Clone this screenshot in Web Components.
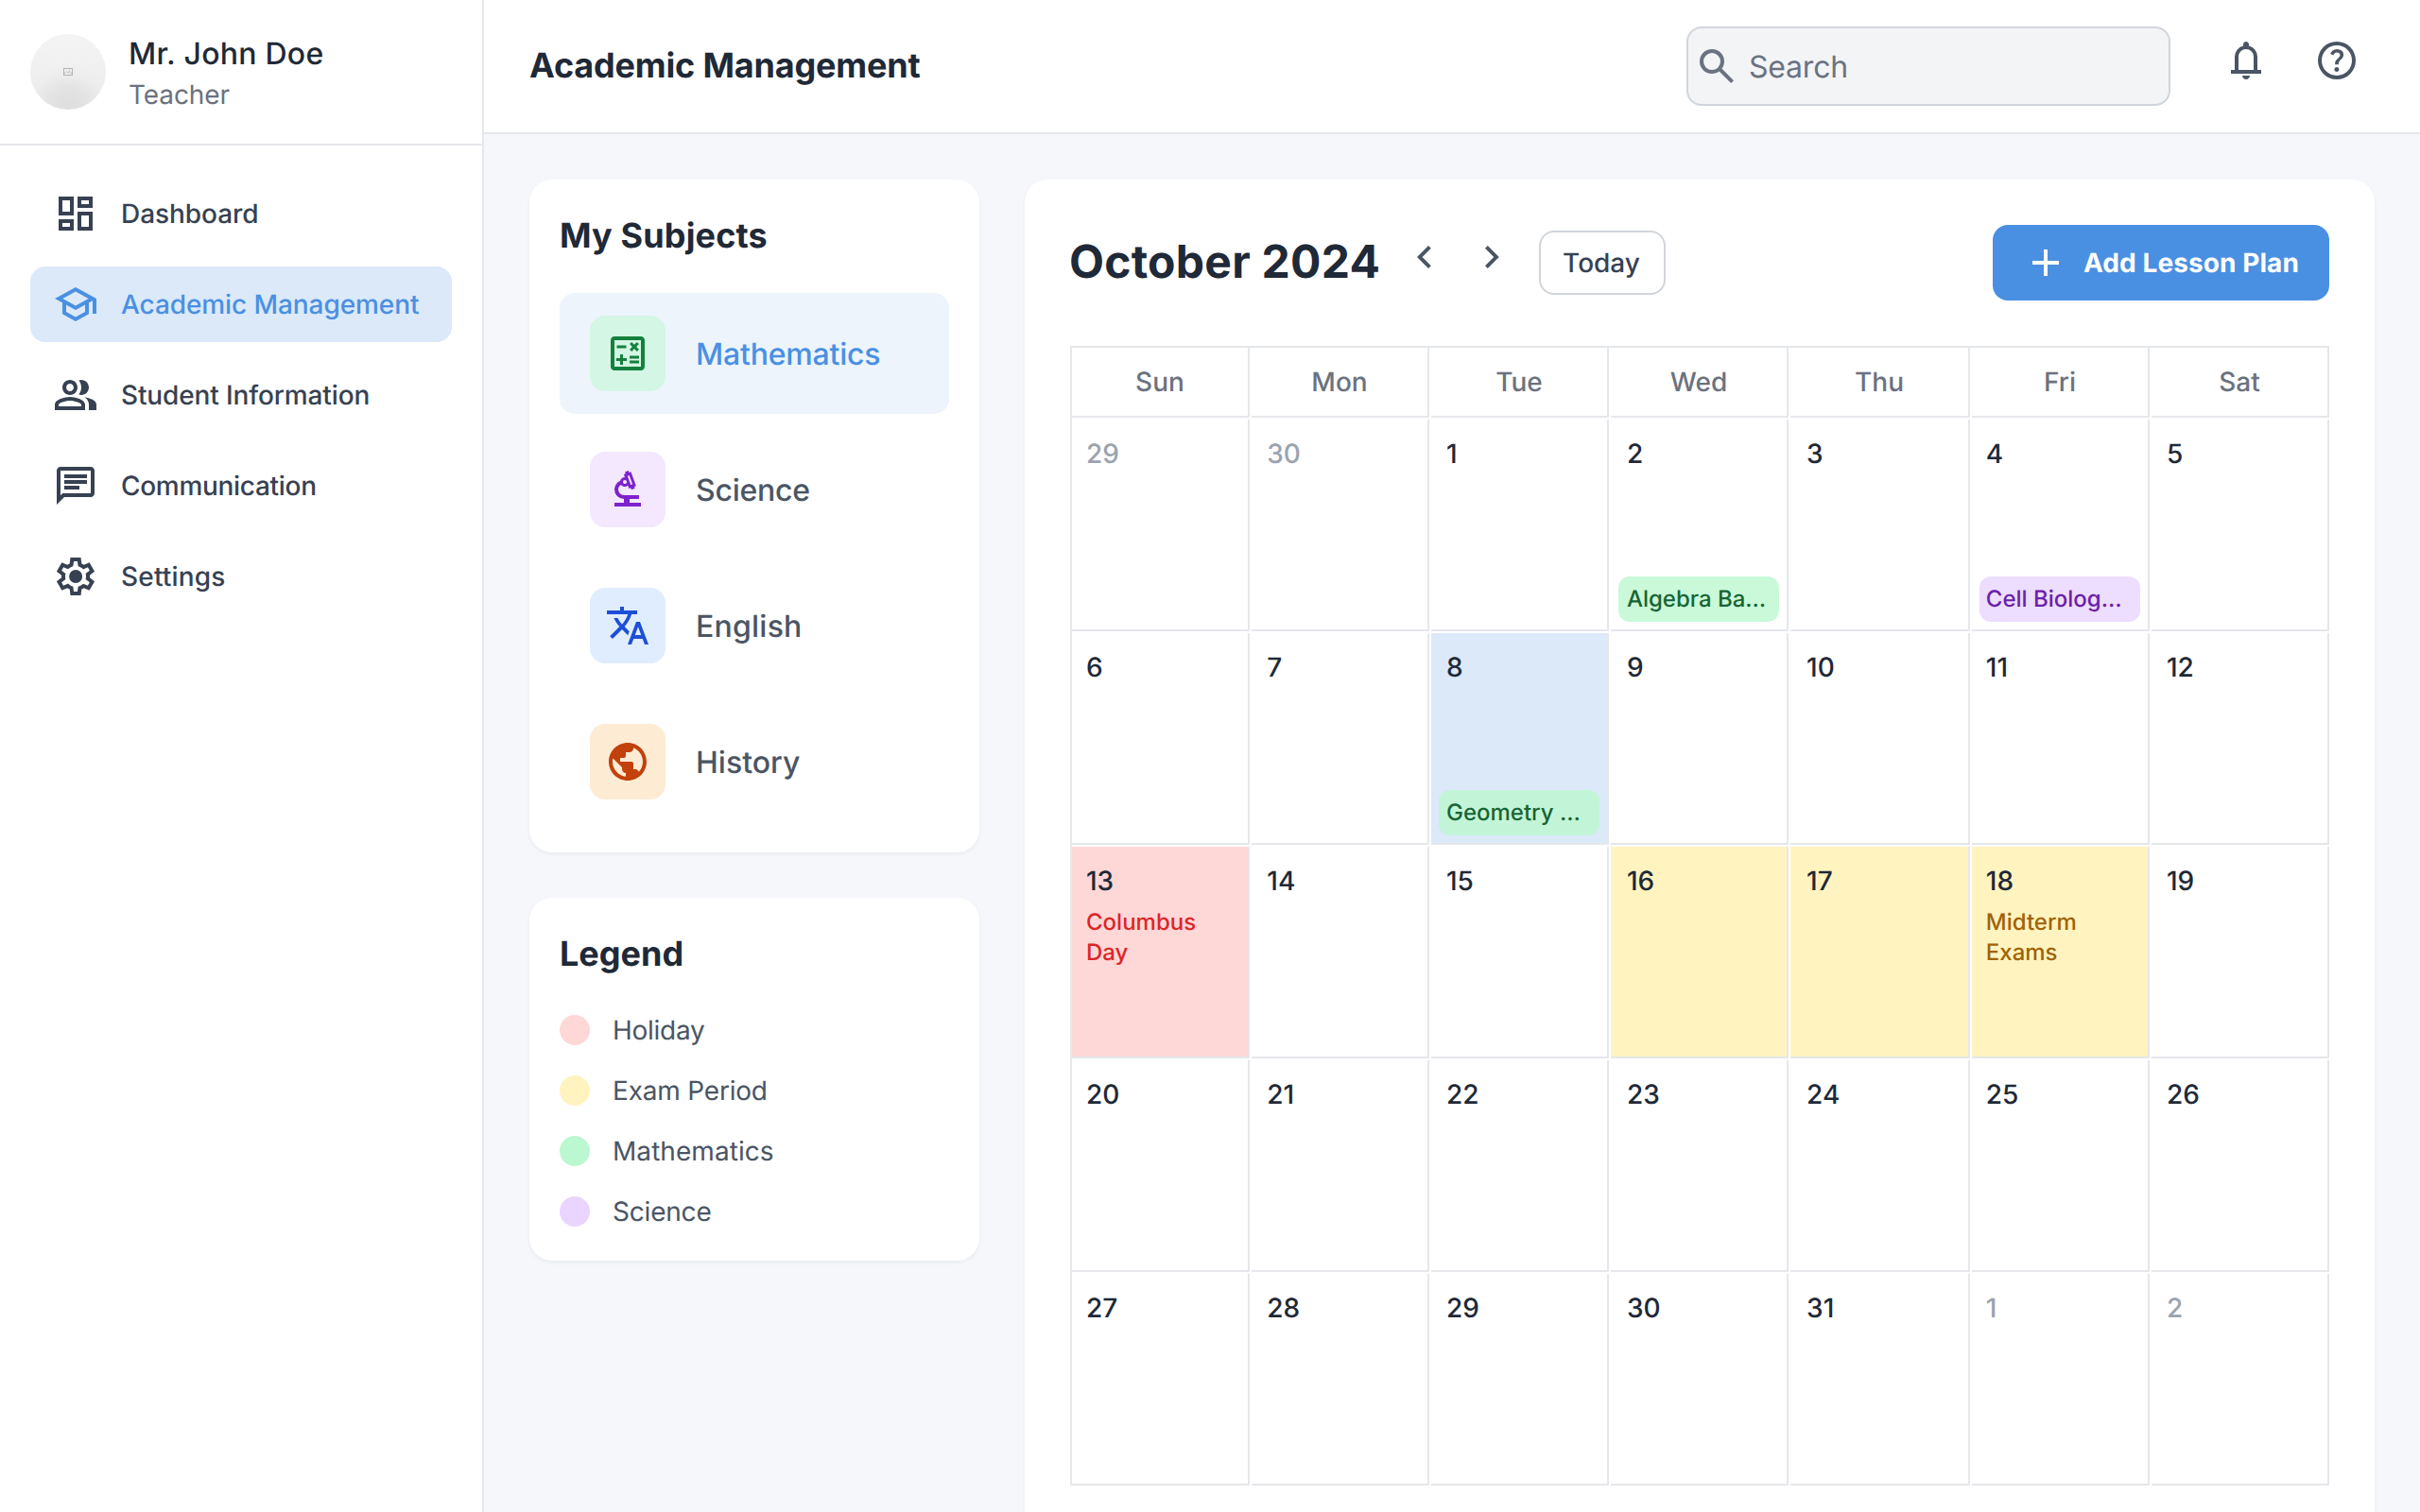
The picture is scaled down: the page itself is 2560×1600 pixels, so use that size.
<!DOCTYPE html>
<html lang="en">
<head>
<meta charset="utf-8">
<title>Academic Management</title>
<style>
  html, body { margin: 0; height: 100%; }
  body { font-family: Inter, "Liberation Sans", sans-serif; font-size: 32px; line-height: 48px; color: #1f2937; background: #f5f7fb; overflow: hidden; text-rendering: geometricPrecision; }
</style>
</head>
<body>
<school-app></school-app>
<script>
const ICONS = {
  dashboard: ['0 0 24 24', 'M19 5v2h-4V5h4M9 5v6H5V5h4m10 8v6h-4v-6h4M9 17v2H5v-2h4M21 3h-8v6h8V3zM11 3H3v10h8V3zm10 8h-8v10h8V11zm-10 4H3v6h8v-6z'],
  school: ['0 0 24 24', 'M12 3L1 9l4 2.18v6L12 21l7-3.82v-6l2-1.09V17h2V9L12 3zm6.82 6L12 12.72 5.18 9 12 5.28 18.82 9zM17 15.99l-5 2.73-5-2.73v-3.72L12 15l5-2.73v3.72z'],
  group: ['0 0 24 24', 'M16.67 13.13C18.04 14.06 19 15.32 19 17v3h4v-3c0-2.18-3.57-3.47-6.33-3.87zM15 12c2.21 0 4-1.79 4-4s-1.79-4-4-4c-.47 0-.91.1-1.33.24C14.5 5.27 15 6.58 15 8s-.5 2.73-1.33 3.76c.42.14.86.24 1.33.24zM9 12c2.21 0 4-1.79 4-4s-1.79-4-4-4-4 1.79-4 4 1.79 4 4 4zm0-6c1.1 0 2 .9 2 2s-.9 2-2 2-2-.9-2-2 .9-2 2-2zm0 7c-2.67 0-8 1.34-8 4v3h16v-3c0-2.66-5.33-4-8-4zm6 5H3v-.99C3.2 16.29 6.3 15 9 15s5.8 1.29 6 2v1z'],
  chat: ['0 0 24 24', 'M4 4h16v12H5.17L4 17.17V4m0-2c-1.1 0-1.99.9-1.99 2L2 22l4-4h14c1.1 0 2-.9 2-2V4c0-1.1-.9-2-2-2H4zm2 10h8v2H6v-2zm0-3h12v2H6V9zm0-3h12v2H6V6z'],
  settings: ['0 -960 960 960', 'm370-80-16-128q-13-5-24.5-12T307-235l-119 50L78-375l103-78q-1-7-1-13.5v-27q0-6.5 1-13.5L78-585l110-190 119 50q11-8 23-15t24-12l16-128h220l16 128q13 5 24.5 12t22.5 15l119-50 110 190-103 78q1 7 1 13.5v27q0 6.5-2 13.5l103 78-110 190-118-50q-11 8-23 15t-24 12L590-80H370Zm70-80h79l14-106q31-8 57.5-23.5T639-327l99 41 39-68-86-65q5-14 7-29.5t2-31.5q0-16-2-31.5t-7-29.5l86-65-39-68-99 42q-22-23-48.5-38.5T533-694l-13-106h-79l-14 106q-31 8-57.5 23.5T321-633l-99-41-39 68 86 64q-5 15-7 30t-2 32q0 16 2 31t7 30l-86 65 39 68 99-42q22 23 48.5 38.5T427-266l13 106Zm42-180q58 0 99-41t41-99q0-58-41-99t-99-41q-59 0-99.5 41T342-480q0 58 40.5 99t99.5 41Z'],
  calculate: ['0 0 24 24', 'M19 3H5c-1.1 0-2 .9-2 2v14c0 1.1.9 2 2 2h14c1.1 0 2-.9 2-2V5c0-1.1-.9-2-2-2zm0 16H5V5h14v14zM6.25 7.72h5v1.5h-5zM13 15.75h5v1.5h-5zM13 13.25h5v1.5h-5zM8 18h1.5v-2h2v-1.5h-2v-2H8v2H6V16h2zM14.09 10.95l1.41-1.41 1.41 1.41 1.06-1.06-1.41-1.42 1.41-1.41L16.91 6l-1.41 1.41L14.09 6l-1.06 1.06 1.41 1.41-1.41 1.42z'],
  biotech: ['0 -960 960 960', 'M200-120v-80h200v-80q-83 0-141.5-58.5T200-480q0-61 33.5-111t89.5-73q8-34 35.5-55t61.5-21l-22-62 38-14-14-36 76-28 12 38 38-14 110 300-38 14 14 38-76 28-12-38-38 14-24-66q-15 14-34.5 21t-39.5 5q-22-2-41-13.5T338-582q-27 16-42.5 43T280-480q0 50 35 85t85 35h320v80H520v80h240v80H200Zm346-458 36-14-68-188-38 14 70 188Zm-126-22q17 0 28.5-11.5T460-640q0-17-11.5-28.5T420-680q-17 0-28.5 11.5T380-640q0 17 11.5 28.5T420-600Z'],
  translate: ['0 0 24 24', 'M12.87 15.07l-2.54-2.51.03-.03c1.74-1.94 2.98-4.17 3.71-6.53H17V4h-7V2H8v2H1v1.99h11.17C11.5 7.92 10.44 9.75 9 11.35 8.07 10.32 7.3 9.19 6.69 8h-2c.73 1.63 1.73 3.17 2.98 4.56l-5.09 5.02L4 19l5-5 3.11 3.11.76-2.04zM18.5 10h-2L12 22h2l1.12-3h4.75L21 22h2l-4.5-12zm-2.62 7l1.62-4.33L19.12 17h-3.24z'],
  public: ['0 0 24 24', 'M12 2C6.48 2 2 6.48 2 12s4.48 10 10 10 10-4.48 10-10S17.52 2 12 2zm-1 17.93c-3.95-.49-7-3.85-7-7.93 0-.62.08-1.21.21-1.79L9 15v1c0 1.1.9 2 2 2v1.93zm6.9-2.54c-.26-.81-1-1.39-1.9-1.39h-1v-3c0-.55-.45-1-1-1H8v-2h2c.55 0 1-.45 1-1V7h2c1.1 0 2-.9 2-2v-.41c2.93 1.19 5 4.06 5 7.41 0 2.08-.8 3.97-2.1 5.39z'],
  bell: ['0 -960 960 960', 'M160-200v-80h80v-280q0-83 50-147.5T420-792v-28q0-25 17.5-42.5T480-880q25 0 42.5 17.5T540-820v28q80 20 130 84.5T720-560v280h80v80H160ZM480-80q-33 0-56.5-23.5T400-160h160q0 33-23.5 56.5T480-80ZM320-280h320v-280q0-66-47-113t-113-47q-66 0-113 47t-47 113v280Z'],
  help: ['0 -960 960 960', 'M478-240q21 0 35.5-14.5T528-290q0-21-14.5-35.5T478-340q-21 0-35.5 14.5T428-290q0 21 14.5 35.5T478-240Zm-36-154h74q0-33 7.5-52t42.5-52q26-26 41-49.5t15-56.5q0-56-41-86t-97-30q-57 0-92.5 30T342-618l66 26q5-18 22.5-39t53.5-21q32 0 48 17.5t16 38.5q0 20-12 37.5T506-526q-44 39-54 59t-10 73Zm38 314q-83 0-156-31.5T197-197q-54-54-85.5-127T80-480q0-83 31.5-156T197-763q54-54 127-85.5T480-880q83 0 156 31.5T763-763q54 54 85.5 127T880-480q0 83-31.5 156T763-197q-54 54-127 85.5T480-80Zm0-80q134 0 227-93t93-227q0-134-93-227t-227-93q-134 0-227 93t-93 227q0 134 93 227t227 93Z'],
  search: ['0 -960 960 960', 'M784-120 532-372q-30 24-69 38t-83 14q-109 0-184.5-75.5T120-580q0-109 75.5-184.5T380-840q109 0 184.5 75.5T640-580q0 44-14 83t-38 69l252 252-56 56ZM380-400q75 0 127.5-52.5T560-580q0-75-52.5-127.5T380-760q-75 0-127.5 52.5T200-580q0 75 52.5 127.5T380-400Z'],
  left: ['0 -960 960 960', 'M560-240 320-480l240-240 56 56-184 184 184 184-56 56Z'],
  right: ['0 -960 960 960', 'M504-480 320-664l56-56 240 240-240 240-56-56 184-184Z'],
  add: ['0 -960 960 960', 'M440-440H200v-80h240v-240h80v240h240v80H520v240h-80v-240Z']
};

const define = (name, render) => customElements.define(name, class extends HTMLElement {
  connectedCallback() {
    if (this.shadowRoot) return;
    this.attachShadow({ mode: 'open' }).innerHTML = render(this);
  }
});

define('ui-icon', el => {
  const [box, d] = ICONS[el.getAttribute('name')];
  return `<style>:host{display:block;flex:none;width:48px;height:48px}svg{display:block;width:100%;height:100%;fill:currentColor}</style>
  <svg viewBox="${box}" aria-hidden="true"><path d="${d}"/></svg>`;
});

define('user-profile', () => `
<style>
  :host{display:flex;align-items:center;gap:24px;padding:32px;border-bottom:2px solid #e5e7eb}
  .avatar{display:flex;align-items:center;justify-content:center;width:80px;height:80px;border-radius:50%;background:radial-gradient(ellipse 50px 42px at 50% 92%,#dedede 0%,#e3e3e3 40%,rgba(236,236,236,.6) 75%,rgba(243,243,243,0) 100%),linear-gradient(#f4f4f4,#ececec)}
  svg{display:block;width:10px;height:8px}
  .name{padding-top:1px;margin-bottom:-1px;font-weight:500;letter-spacing:.25px}
  .role{font-size:28px;line-height:40px;color:#6b7280;letter-spacing:-.1px}
</style>
<div class="avatar"><svg viewBox="0 0 10 8" fill="none" stroke="#b4b4b4"><rect x=".5" y=".5" width="9" height="7"/><path d="M1 6l2.500-2.500L5.500 5.500M5 4.500l2-1 2 3M6 2h1" stroke-width=".8"/></svg></div>
<div><div class="name"><slot name="name"></slot></div><div class="role"><slot name="role"></slot></div></div>`);

define('nav-item', el => `
<style>
  :host{display:flex;align-items:center;gap:24px;height:80px;padding:0 24px;border-radius:16px;font-size:28px;line-height:40px;font-weight:500;color:#374151;white-space:nowrap}
  :host([active]){background:#dbe9f9;color:#4a90e2}
</style>
<ui-icon name="${el.getAttribute('icon')}"></ui-icon><slot></slot>`);

define('side-bar', () => `
<style>
  :host{display:block;box-sizing:border-box;width:512px;background:#fff;border-right:2px solid #e5e7eb}
  nav{display:flex;flex-direction:column;gap:16px;padding:32px}
</style>
<user-profile><span slot="name">Mr. John Doe</span><span slot="role">Teacher</span></user-profile>
<nav>
  <nav-item icon="dashboard" style="letter-spacing:-.05px">Dashboard</nav-item>
  <nav-item icon="school" active style="letter-spacing:-.08px">Academic Management</nav-item>
  <nav-item icon="group" style="letter-spacing:-.13px">Student Information</nav-item>
  <nav-item icon="chat" style="letter-spacing:-.3px">Communication</nav-item>
  <nav-item icon="settings" style="letter-spacing:.18px">Settings</nav-item>
</nav>`);

define('search-box', () => `
<style>
  :host{display:flex;align-items:center;gap:10px;box-sizing:border-box;width:512px;height:84px;padding:0 6px;border:2px solid #d1d5db;border-radius:16px;background:#f3f4f6;color:#6b7280}
  span{padding-top:2px;letter-spacing:-.2px}
</style>
<ui-icon name="search"></ui-icon><span><slot></slot></span>`);

define('top-bar', () => `
<style>
  :host{display:flex;align-items:center;justify-content:space-between;box-sizing:border-box;height:142px;padding:0 64px 0 48px;background:#fff;border-bottom:2px solid #e5e7eb}
  h1{margin:0;padding-bottom:2px;font-size:36px;line-height:56px;font-weight:700;letter-spacing:-.17px}
  .tools{display:flex;align-items:center}
  .buttons{display:flex;gap:48px;margin-left:56px;padding-bottom:12px;color:#4b5563}
</style>
<h1><slot></slot></h1>
<div class="tools"><search-box>Search</search-box><div class="buttons"><ui-icon name="bell"></ui-icon><ui-icon name="help"></ui-icon></div></div>`);

define('ui-card', () => `
<style>
  :host{display:block;border-radius:24px;background:#fff;box-shadow:0 2px 4px rgba(0,0,0,.05)}
</style>
<slot></slot>`);

define('subject-item', el => `
<style>
  :host{display:flex;align-items:center;gap:32px;height:128px;padding:0 32px;border-radius:16px;font-weight:500;color:#4b5563}
  :host([active]){background:#edf4fc;color:#4a90e2}
  .tile{display:flex;align-items:center;justify-content:center;width:80px;height:80px;border-radius:16px;background:${el.getAttribute('tile')};color:${el.getAttribute('ink')}}
  span{padding-top:2px}
</style>
<div class="tile"><ui-icon name="${el.getAttribute('icon')}"></ui-icon></div><span><slot></slot></span>`);

define('subject-list', () => `
<style>
  :host{display:block}
  .body{padding:32px}
  h2{margin:-1px 0 33px;font-size:36px;line-height:56px;font-weight:700;letter-spacing:.15px}
  .list{display:flex;flex-direction:column;gap:16px}
</style>
<ui-card><div class="body"><h2>My Subjects</h2><div class="list">
  <subject-item active icon="calculate" tile="#d4f6e4" ink="#15803d" style="letter-spacing:-.2px">Mathematics</subject-item>
  <subject-item icon="biotech" tile="#f3e8ff" ink="#7e22ce" style="letter-spacing:-.25px">Science</subject-item>
  <subject-item icon="translate" tile="#e0edff" ink="#1d4ed8" style="letter-spacing:.23px">English</subject-item>
  <subject-item icon="public" tile="#feebd4" ink="#c2410c">History</subject-item>
</div></div></ui-card>`);

define('legend-item', el => `
<style>
  :host{display:flex;align-items:center;gap:24px;font-size:28px;line-height:40px;color:#4b5563}
  i{width:32px;height:32px;border-radius:50%;background:${el.getAttribute('color')}}
</style>
<i></i><span><slot></slot></span>`);

define('calendar-legend', () => `
<style>
  :host{display:block}
  .body{padding:32px}
  h2{margin:-1px 0 33px;font-size:36px;line-height:56px;font-weight:700}
  .list{display:flex;flex-direction:column;gap:24px}
</style>
<ui-card><div class="body"><h2>Legend</h2><div class="list">
  <legend-item color="#fed7d7" style="letter-spacing:-.28px">Holiday</legend-item>
  <legend-item color="#fff4bf" style="letter-spacing:-.2px">Exam Period</legend-item>
  <legend-item color="#bbf7d0" style="letter-spacing:.06px">Mathematics</legend-item>
  <legend-item color="#e9d5ff" style="letter-spacing:-.2px">Science</legend-item>
</div></div></ui-card>`);

define('calendar-header', () => `
<style>
  :host{display:flex;align-items:center;justify-content:space-between;height:80px}
  .left{display:flex;align-items:center}
  h2{margin:0 1px 0 -1px;width:343px;padding-bottom:2px;font-size:48px;line-height:64px;font-weight:700;letter-spacing:.25px;white-space:nowrap}
  .arrows{display:flex;gap:24px;padding:0 0 12px 8px;color:#4b5563}
  .today{box-sizing:border-box;width:134px;height:68px;margin-left:25px;padding-right:2px;border:2px solid #d1d5db;border-radius:16px;font-size:28px;line-height:64px;font-weight:500;color:#374151;text-align:center}
  .add{display:flex;align-items:center;gap:16px;box-sizing:border-box;width:356px;height:80px;padding-left:32px;border-radius:16px;background:#4a90e2;color:#fff;font-size:28px;line-height:40px;font-weight:700;letter-spacing:.08px;white-space:nowrap}
</style>
<div class="left"><h2>October 2024</h2><div class="arrows"><ui-icon name="left"></ui-icon><ui-icon name="right"></ui-icon></div><div class="today">Today</div></div>
<div class="add"><ui-icon name="add"></ui-icon><span>Add Lesson Plan</span></div>`);

define('day-cell', el => {
  const a = n => el.getAttribute(n);
  return `
<style>
  :host{display:flex;flex-direction:column;justify-content:space-between;box-sizing:border-box;height:224px;min-width:0;border-right:2px solid #e5e7eb;border-bottom:2px solid #e5e7eb;font-weight:500}
  :host([muted]){color:#9ca3af}
  :host([kind=today]){background:#dbe9f9}
  :host([kind=holiday]){background:#fed7d7}
  :host([kind=exam]){background:#fff4bf}
  .top{padding:16px 16px 0 calc(16px + var(--shift,0px))}
  .num{font-size:28px;line-height:40px}
  .note{margin-top:8px;font-size:24px;line-height:32px;color:#dc2626}
  :host([kind=exam]) .note{color:#a16207}
  .event{margin:8px;padding:8px 4px 8px calc(8px + var(--shift,0px));border-radius:12px;font-size:24px;line-height:32px;white-space:nowrap;background:rgba(187,247,208,.8);color:#166534}
  .event.science{background:rgba(233,213,255,.8);color:#6b21a8}
</style>
<div class="top"><div class="num"><slot></slot></div>${a('note') ? `<div class="note">${a('note')}</div>` : ''}</div>
${a('event') ? `<div class="event ${a('subject') || ''}">${a('event')}</div>` : ''}`;
});

define('month-grid', () => {
  const shift = [-1, 0.3, 0, 0.9, 1.1, -1.2, 0];
  const days = {
    2: 'event="Algebra Ba…"', 4: 'event="Cell Biolog…" subject="science"',
    8: 'kind="today" event="Geometry …"', 13: 'kind="holiday" note="Columbus Day"',
    16: 'kind="exam"', 17: 'kind="exam"', 18: 'kind="exam" note="Midterm Exams"'
  };
  let cells = '';
  for (let i = 0; i < 35; i++) {
    const outside = i < 2 || i > 32;
    const n = i < 2 ? 29 + i : i > 32 ? i - 32 : i - 1;
    cells += `<day-cell style="--shift:${shift[i % 7]}px" ${outside ? 'muted' : days[n] || ''}>${n}</day-cell>`;
  }
  return `
<style>
  :host{display:grid;grid-template-columns:188px 188px 188px 188px 190px 188px 188px;gap:2px;border-left:2px solid #e5e7eb;border-top:2px solid #e5e7eb}
  .dow{box-sizing:border-box;height:74px;padding:16px;border-right:2px solid #e5e7eb;border-bottom:2px solid #e5e7eb;text-align:center;font-size:28px;line-height:40px;font-weight:500;color:#6b7280}
</style>
${['Sun', 'Mon', 'Tue', 'Wed', 'Thu', 'Fri', 'Sat'].map(d => `<div class="dow">${d}</div>`).join('')}${cells}`;
});

define('month-calendar', () => `
<style>
  :host{display:block}
  .body{padding:48px}
  calendar-header{margin-bottom:48px}
</style>
<ui-card><div class="body"><calendar-header></calendar-header><month-grid></month-grid></div></ui-card>`);

define('school-app', () => `
<style>
  :host{display:grid;grid-template-columns:512px minmax(0,1fr);height:1600px;overflow:hidden}
  main{display:grid;grid-template-columns:476px minmax(0,1fr);gap:48px;align-items:start;padding:48px}
  .column{display:flex;flex-direction:column;gap:48px}
</style>
<side-bar></side-bar>
<div>
  <top-bar>Academic Management</top-bar>
  <main><div class="column"><subject-list></subject-list><calendar-legend></calendar-legend></div><month-calendar></month-calendar></main>
</div>`);
</script>
</body>
</html>
